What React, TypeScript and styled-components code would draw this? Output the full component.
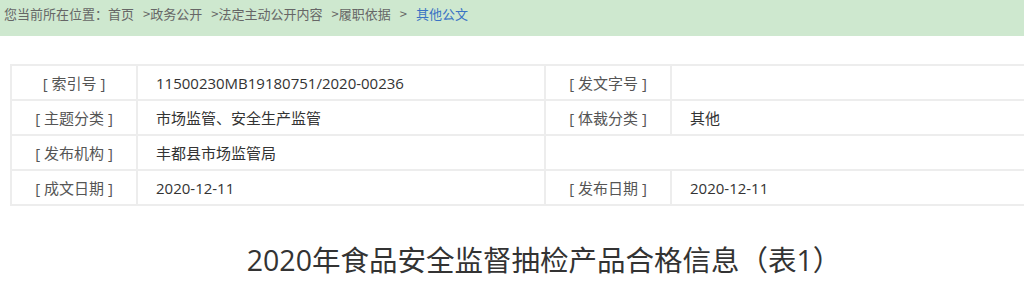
import React from 'react'
import styled, { createGlobalStyle } from 'styled-components'

const GlobalStyle = createGlobalStyle`
  html, body {
    margin: 0;
    padding: 0;
    background: #fff;
    overflow: hidden;
  }
  body {
    font-family: "Open Sans", "Noto Sans CJK SC", sans-serif;
    color: #333;
  }
`

// ---- breadcrumb ----
const Crumbs = styled.div`
  height: 36px;
  background: #cee8cf;
  padding: 0 0 0 4px;
  display: flex;
  align-items: flex-start;
  font-family: "Noto Sans CJK SC", sans-serif;
  font-size: 13px;
  line-height: 28px;
  color: #666;
  white-space: nowrap;
`

const Crumb = styled.span<{ $current?: boolean }>`
  color: ${(p) => (p.$current ? '#3a73c4' : '#666')};
  margin-right: 9px;
`

// ---- meta table ----
const Wrap = styled.div`
  width: 1068px;
  margin: 28px 0 0 10px;
`

const Meta = styled.table`
  width: 100%;
  border-collapse: collapse;
  table-layout: fixed;
  font-size: 15px;
  color: #333;
`

const Row = styled.tr`
  height: 35px;
`

const Label = styled.td`
  border: 2px solid #ededed;
  text-align: center;
  color: #555;
  padding: 0;
`

const Value = styled.td`
  border: 2px solid #ededed;
  padding: 0 0 0 18px;
  color: #333;
`

const Title = styled.h1`
  margin: 34px 0 0;
  text-align: center;
  font-size: 28.5px;
  font-weight: normal;
  color: #333;
  line-height: 40px;
`

const trail = ['您当前所在位置：首页', '>政务公开', '>法定主动公开内容', '>履职依据', '>']

export default function App() {
  return (
    <>
      <GlobalStyle />
      <Crumbs>
        {trail.map((t) => (
          <Crumb key={t}>{t}</Crumb>
        ))}
        <Crumb $current>其他公文</Crumb>
      </Crumbs>
      <Wrap>
        <Meta>
          <colgroup>
            <col style={{ width: 126 }} />
            <col style={{ width: 408 }} />
            <col style={{ width: 126 }} />
            <col />
          </colgroup>
          <tbody>
            <Row>
              <Label>[ 索引号 ]</Label>
              <Value>11500230MB19180751/2020-00236</Value>
              <Label>[ 发文字号 ]</Label>
              <Value></Value>
            </Row>
            <Row>
              <Label>[ 主题分类 ]</Label>
              <Value>市场监管、安全生产监管</Value>
              <Label>[ 体裁分类 ]</Label>
              <Value>其他</Value>
            </Row>
            <Row>
              <Label>[ 发布机构 ]</Label>
              <Value>丰都县市场监管局</Value>
              <Value colSpan={2}></Value>
            </Row>
            <Row>
              <Label>[ 成文日期 ]</Label>
              <Value>2020-12-11</Value>
              <Label>[ 发布日期 ]</Label>
              <Value>2020-12-11</Value>
            </Row>
          </tbody>
        </Meta>
        <Title>2020年食品安全监督抽检产品合格信息（表1）</Title>
      </Wrap>
    </>
  )
}
